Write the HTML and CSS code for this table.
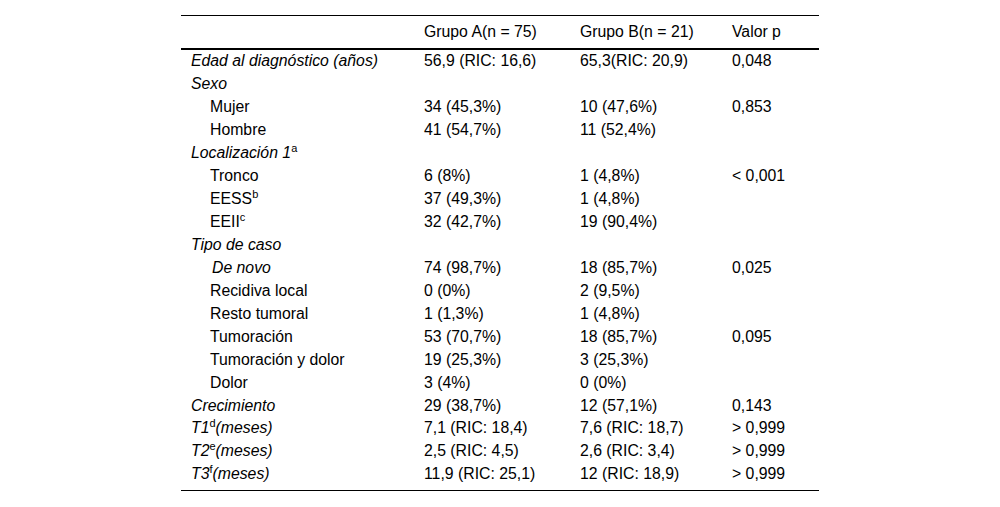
FILE: index.html
```html
<!DOCTYPE html>
<html lang="es">
<head>
<meta charset="utf-8">
<link rel="stylesheet" href="styles.css">
</head>
<body>
<table class="data">
  <colgroup>
    <col class="c1"><col class="c2"><col class="c3"><col class="c4">
  </colgroup>
  <thead>
    <tr><th></th><th>Grupo A(n = 75)</th><th>Grupo B(n = 21)</th><th>Valor p</th></tr>
  </thead>
  <tbody>
    <tr><td class="it">Edad al diagnóstico (años)</td><td>56,9 (RIC: 16,6)</td><td>65,3(RIC: 20,9)</td><td>0,048</td></tr>
    <tr><td class="it">Sexo</td><td></td><td></td><td></td></tr>
    <tr><td class="sub">Mujer</td><td>34 (45,3%)</td><td>10 (47,6%)</td><td>0,853</td></tr>
    <tr><td class="sub">Hombre</td><td>41 (54,7%)</td><td>11 (52,4%)</td><td></td></tr>
    <tr><td class="it">Localización 1<sup>a</sup></td><td></td><td></td><td></td></tr>
    <tr><td class="sub">Tronco</td><td>6 (8%)</td><td>1 (4,8%)</td><td>&lt; 0,001</td></tr>
    <tr><td class="sub">EESS<sup>b</sup></td><td>37 (49,3%)</td><td>1 (4,8%)</td><td></td></tr>
    <tr><td class="sub">EEII<sup>c</sup></td><td>32 (42,7%)</td><td>19 (90,4%)</td><td></td></tr>
    <tr><td class="it">Tipo de caso</td><td></td><td></td><td></td></tr>
    <tr><td class="sub it">De novo</td><td>74 (98,7%)</td><td>18 (85,7%)</td><td>0,025</td></tr>
    <tr><td class="sub">Recidiva local</td><td>0 (0%)</td><td>2 (9,5%)</td><td></td></tr>
    <tr><td class="sub">Resto tumoral</td><td>1 (1,3%)</td><td>1 (4,8%)</td><td></td></tr>
    <tr><td class="sub">Tumoración</td><td>53 (70,7%)</td><td>18 (85,7%)</td><td>0,095</td></tr>
    <tr><td class="sub">Tumoración y dolor</td><td>19 (25,3%)</td><td>3 (25,3%)</td><td></td></tr>
    <tr><td class="sub">Dolor</td><td>3 (4%)</td><td>0 (0%)</td><td></td></tr>
    <tr><td class="it">Crecimiento</td><td>29 (38,7%)</td><td>12 (57,1%)</td><td>0,143</td></tr>
    <tr><td class="it">T1<sup>d</sup>(meses)</td><td>7,1 (RIC: 18,4)</td><td>7,6 (RIC: 18,7)</td><td>&gt; 0,999</td></tr>
    <tr><td class="it">T2<sup>e</sup>(meses)</td><td>2,5 (RIC: 4,5)</td><td>2,6 (RIC: 3,4)</td><td>&gt; 0,999</td></tr>
    <tr class="last"><td class="it">T3<sup>f</sup>(meses)</td><td>11,9 (RIC: 25,1)</td><td>12 (RIC: 18,9)</td><td>&gt; 0,999</td></tr>
  </tbody>
</table>
</body>
</html>
```
FILE: styles.css
```css
html, body {
  margin: 0;
  padding: 0;
  background: #ffffff;
}
body {
  padding-top: 15px;
  font-family: "Liberation Sans", Arial, sans-serif;
  font-size: 15.8px;
  color: #000;
}
.data {
  width: 638px;
  margin: 0 auto;
  border-collapse: collapse;
  table-layout: fixed;
  border-top: 1px solid #000;
  border-bottom: 1px solid #000;
}
.c1 { width: 233px; }
.c2 { width: 156px; }
.c3 { width: 152px; }
.c4 { width: 97px; }
th, td {
  text-align: left;
  vertical-align: middle;
  padding: 0 0 0 10px;
  white-space: nowrap;
  line-height: 18px;
}
th {
  font-weight: normal;
  height: 32px;
  border-bottom: 2px solid #000;
}
td {
  height: 22.95px;
}
.last td {
  padding-bottom: 4px;
}
.it { font-style: italic; }
.sub { padding-left: 29px; }
.sub.it { padding-left: 31px; }
sup {
  font-size: 11px;
  font-style: normal;
  line-height: 0;
  vertical-align: 6px;
}
```
